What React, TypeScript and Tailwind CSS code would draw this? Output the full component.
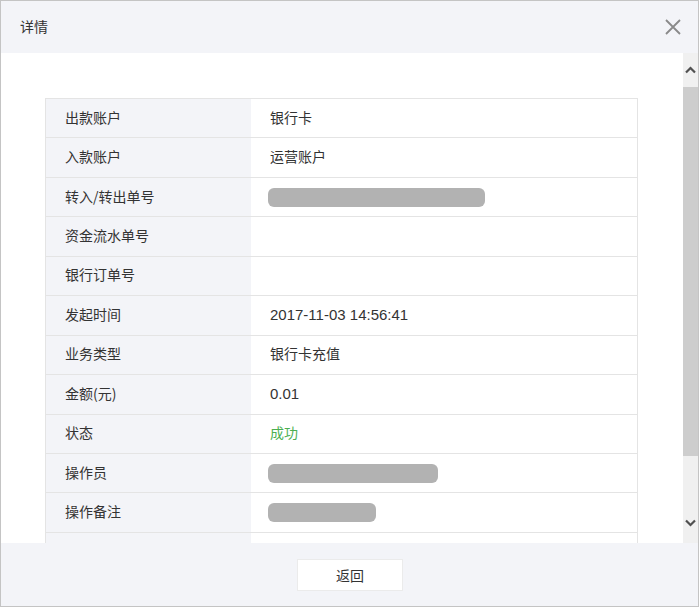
import React from "react";

type Row = { label: string; value?: string; bar?: number; green?: boolean };

const rows: Row[] = [
  { label: "出款账户", value: "银行卡" },
  { label: "入款账户", value: "运营账户" },
  { label: "转入/转出单号", bar: 217 },
  { label: "资金流水单号" },
  { label: "银行订单号" },
  { label: "发起时间", value: "2017-11-03 14:56:41" },
  { label: "业务类型", value: "银行卡充值" },
  { label: "金额(元)", value: "0.01" },
  { label: "状态", value: "成功", green: true },
  { label: "操作员", bar: 170 },
  { label: "操作备注", bar: 108 },
  { label: "" },
];

const font = { fontFamily: '"Noto Sans CJK SC", "Liberation Sans", sans-serif' };
const latin = { fontFamily: '"Liberation Sans", "Noto Sans CJK SC", sans-serif' };

export default function App() {
  return (
    <div
      className="w-[699px] h-[607px] flex flex-col border border-[#c4c4c4] bg-white text-[14px] text-[#333]"
      style={font}
    >
      {/* header */}
      <div className="h-[52px] shrink-0 flex items-center justify-between bg-[#f3f4f8] pl-[19px] pr-[17px] pb-[1px]">
        <span className="text-[14px] text-[#333]">详情</span>
        <svg width="16" height="16" viewBox="0 0 16 16" fill="none" stroke="#8a8a8a" strokeWidth="1.8">
          <path d="M1 1L15 15M15 1L1 15" />
        </svg>
      </div>

      {/* body */}
      <div className="h-[490px] shrink-0 flex">
        <div className="flex-1 overflow-hidden pt-[45px] pl-[44px] pr-[45px]">
          <div className="border-t border-l border-r border-[#e4e4e4]">
            {rows.map((r, i) => (
              <div key={i} className="flex h-[39.45px] border-b border-[#e4e4e4]">
                <div className="w-[205px] shrink-0 bg-[#f3f4f8] flex items-center pl-[19px] pb-[2px]">{r.label}</div>
                <div className="flex-1 flex items-center pl-[19px] pb-[2px]">
                  {r.bar ? (
                    <div className="h-[19px] rounded-[6px] bg-[#b2b2b2] -ml-[2px] mt-[2px]" style={{ width: r.bar }} />
                  ) : r.value && /^\d/.test(r.value) ? (
                    <span className="text-[15px] pt-[2px]" style={latin}>{r.value}</span>
                  ) : (
                    <span className={r.green ? "text-[#4caf50]" : ""}>{r.value}</span>
                  )}
                </div>
              </div>
            ))}
          </div>
        </div>

        {/* scrollbar */}
        <div className="w-[15px] shrink-0 flex flex-col bg-[#f0f0f0]">
          <div className="h-[34px] flex items-center justify-center">
            <svg width="11" height="8" viewBox="0 0 11 8" fill="none" stroke="#505050" strokeWidth="2.2">
              <path d="M1 6.5L5.5 2L10 6.5" />
            </svg>
          </div>
          <div className="h-[369px] bg-[#cdcdcd]" />
          <div className="flex-1 flex items-end justify-center pb-[16px]">
            <svg width="11" height="8" viewBox="0 0 11 8" fill="none" stroke="#505050" strokeWidth="2.2">
              <path d="M1 1.5L5.5 6L10 1.5" />
            </svg>
          </div>
        </div>
      </div>

      {/* footer */}
      <div className="flex-1 bg-[#f3f4f8] flex justify-center pt-[16px] pl-[1px]">
        <button className="w-[106px] h-[32px] bg-white border border-[#ebebeb] text-[14px] text-[#333]">返回</button>
      </div>
    </div>
  );
}
